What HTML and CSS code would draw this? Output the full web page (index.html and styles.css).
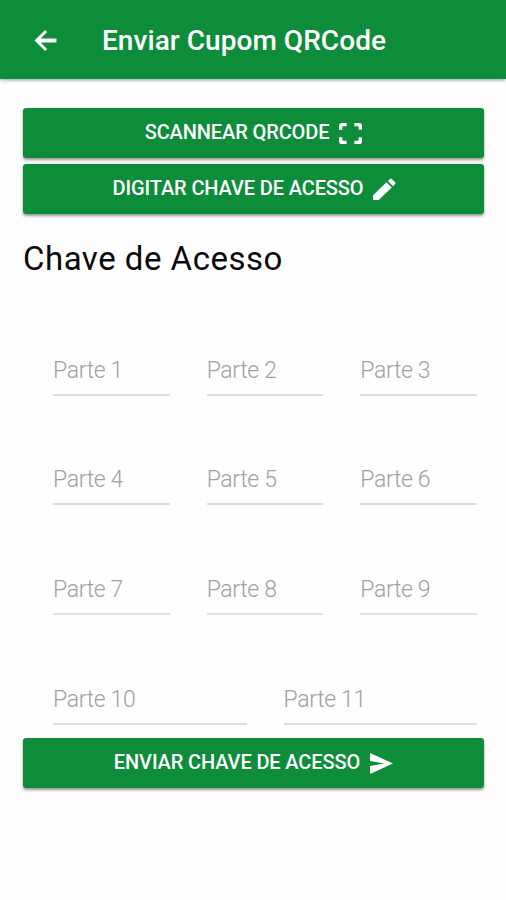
FILE: index.html
```html
<!DOCTYPE html>
<html lang="pt-BR">
<head>
  <meta charset="UTF-8">
  <meta name="viewport" content="width=device-width, initial-scale=1.0">
  <title>Enviar Cupom QRCode</title>
  <link rel="stylesheet" href="styles.css">
</head>
<body>
  <header class="toolbar">
    <svg class="back" viewBox="0 0 24 24"><path d="M20.500 10.500H8.300l5-5L11.700 3.800 3.500 12l8.200 8.200 1.600-1.700-5-5H20.500z"/></svg>
    <h1>Enviar Cupom QRCode</h1>
  </header>

  <main>
    <button type="button" class="btn btn-scan">
      <span>SCANNEAR QRCODE</span>
      <svg viewBox="0 0 24 24"><path d="M0 8V4Q0 1 3.500 1H8V4.500H4.500Q3.500 4.500 3.500 5.500V8zM16 1H20.500Q24 1 24 4V8H20.500V5.500Q20.500 4.500 19.500 4.500H16zM0 16H3.500V18.500Q3.500 19.500 4.500 19.500H8V23H3.500Q0 23 0 20zM20.500 16H24V20Q24 23 20.500 23H16V19.500H19.500Q20.500 19.500 20.500 18.500z"/></svg>
    </button>
    <button type="button" class="btn btn-edit">
      <span>DIGITAR CHAVE DE ACESSO</span>
      <svg viewBox="0 0 24 24"><path d="M0 18L14 4.500 19.500 10 6 23H1Q0 23 0 22zM15.500 3L17.700 1Q18.700 0.200 19.700 1.200L23 4.300Q24 5.300 23 6.300L21 8.500z"/></svg>
    </button>

    <h2>Chave de Acesso</h2>

    <!-- Partes da chave -->
    <form>
      <div class="row">
        <div class="col"><input type="text" placeholder="Parte 1"></div>
        <div class="col"><input type="text" placeholder="Parte 2"></div>
        <div class="col"><input type="text" placeholder="Parte 3"></div>
      </div>
      <div class="row">
        <div class="col"><input type="text" placeholder="Parte 4"></div>
        <div class="col"><input type="text" placeholder="Parte 5"></div>
        <div class="col"><input type="text" placeholder="Parte 6"></div>
      </div>
      <div class="row">
        <div class="col"><input type="text" placeholder="Parte 7"></div>
        <div class="col"><input type="text" placeholder="Parte 8"></div>
        <div class="col"><input type="text" placeholder="Parte 9"></div>
      </div>
      <div class="row">
        <div class="col"><input type="text" placeholder="Parte 10"></div>
        <div class="col"><input type="text" placeholder="Parte 11"></div>
      </div>

      <button type="button" class="btn btn-send">
        <span>ENVIAR CHAVE DE ACESSO</span>
        <svg viewBox="0 0 24 24"><path d="M0 1L24 12 0 23V14.500L15 12 0 9.500z"/></svg>
      </button>
    </form>
  </main>
</body>
</html>
```

FILE: styles.css
```css
* {
  box-sizing: border-box;
}
body {
  margin: 0;
  background: #fefefe;
  font-family: Roboto, sans-serif;
  color: #0a0a0a;
}
.toolbar {
  display: flex;
  align-items: center;
  height: 79px;
  padding: 1px 0 0 30px;
  background-color: #0d8d3a;
  box-shadow: 0 1px 4px rgba(0, 0, 0, 0.4);
  color: #fff;
}
.toolbar h1 {
  margin: 1px 0 0 41px;
  font-size: 28px;
  font-weight: 500;
  line-height: 32px;
  letter-spacing: 0.05px;
}
svg {
  fill: currentColor;
}
.back {
  width: 31px;
  height: 31px;
}
main {
  padding: 29px 22px 0 23px;
}
.btn {
  display: flex;
  align-items: center;
  justify-content: center;
  width: 100%;
  height: 50px;
  margin: 0 0 6px;
  padding: 0 0 2px;
  border: none;
  border-radius: 3px;
  background-color: #0d8d3a;
  box-shadow: 0 2px 3px rgba(0, 0, 0, 0.4);
  color: #fff;
  font-family: inherit;
  font-size: 20px;
  font-weight: 500;
  letter-spacing: -0.12px;
  cursor: pointer;
}
.btn svg {
  width: 23px;
  height: 23px;
  margin: 3px 0 0 10px;
}
.btn-edit {
  padding-left: 2px;
}
.btn-send svg {
  margin-top: 4px;
}
h2 {
  margin: 24px 0 0;
  font-size: 33px;
  font-weight: 400;
  line-height: 42px;
  letter-spacing: 0.5px;
}
form {
  padding-top: 6px;
}
.row {
  display: flex;
  height: 109.7px;
}
.col {
  display: flex;
  flex: 1;
  align-items: flex-end;
  padding: 0 7px 0 30px;
}
input {
  width: 100%;
  height: 50px;
  padding: 1px 0 0;
  border: none;
  border-bottom: 2px solid #dedede;
  border-radius: 0;
  background: none;
  font-family: inherit;
  font-size: 23px;
  font-weight: 300;
  letter-spacing: -0.35px;
  outline: none;
}
input::placeholder {
  color: #a0a0a0;
  opacity: 1;
}
.btn-send {
  margin-top: 13px;
}
```
